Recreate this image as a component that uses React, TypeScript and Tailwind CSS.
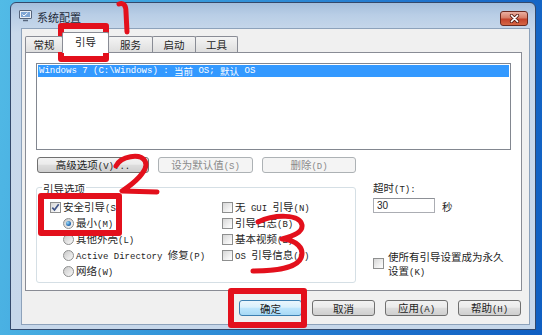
import React from "react";

function T({ s, m, c }: { s: string; m: string; c: string }) {
  const parts = s.match(/[\x00-\x7f]+|[^\x00-\x7f]+/g) || [];
  return (
    <>
      {parts.map((p, i) =>
        /^[\x00-\x7f]/.test(p) ? (
          <span key={i} className={m}>
            {p}
          </span>
        ) : (
          <span key={i} className={c}>
            {p}
          </span>
        )
      )}
    </>
  );
}

const MONO = "font-['Liberation_Mono',monospace] text-[9px] whitespace-pre";
const CJK = "font-['Noto_Sans_CJK_SC',sans-serif] text-[10.5px]";

function L({ s }: { s: string }) {
  return <T s={s} m={MONO} c={CJK} />;
}

function Check({ checked }: { checked?: boolean }) {
  return (
    <span className="inline-flex h-[11px] w-[11px] shrink-0 items-center justify-center border border-[#8e8f8f] bg-[linear-gradient(135deg,#d6d6d6_0%,#f4f4f4_70%,#ffffff_100%)]">
      {checked && (
        <svg width="9" height="9" viewBox="0 0 9 9">
          <path d="M1.3 4.6 L3.5 7 L7.7 1.3" fill="none" stroke="#3f5488" strokeWidth="1.7" />
        </svg>
      )}
    </span>
  );
}

function Radio({ checked }: { checked?: boolean }) {
  return (
    <span className="inline-flex h-[11px] w-[11px] shrink-0 items-center justify-center rounded-full border border-[#8e8f8f] bg-[linear-gradient(135deg,#c8c8c8_0%,#e6e6e6_60%,#fafafa_100%)]">
      {checked && (
        <span className="h-[5px] w-[5px] rounded-full bg-[radial-gradient(circle_at_35%_35%,#9adcf8_0%,#2a70b8_60%,#143f78_100%)]" />
      )}
    </span>
  );
}

function Row({ children, label, indent }: { children: React.ReactNode; label: string; indent?: boolean }) {
  return (
    <div className={indent ? "ml-[13px] flex h-[16px] items-center gap-[2px] text-[#1e1e1e]" : "flex h-[16px] items-center gap-[2px] text-[#1e1e1e]"}>
      {children}
      <span className="leading-[16px]">
        <L s={label} />
      </span>
    </div>
  );
}

function Btn({ label, w, disabled, def }: { label: string; w: string; disabled?: boolean; def?: boolean }) {
  const base = "flex h-[16px] items-center justify-center rounded-[3px] border leading-[14px] ";
  const cls = disabled
    ? base + "border-[#adb2b5] bg-[#f4f4f4] text-[#8a8a8a]"
    : def
    ? base + "border-[#3c7fb1] bg-[linear-gradient(180deg,#eaf6fd_0%,#d9f0fc_45%,#bee6fd_50%,#a7d9f5_100%)] text-[#1e1e1e]"
    : base + "border-[#707070] bg-[linear-gradient(180deg,#f2f2f2_0%,#ebebeb_45%,#dddddd_50%,#cfcfcf_100%)] text-[#1e1e1e]";
  return (
    <div className={cls + " " + w}>
      <span>
        <L s={label} />
      </span>
    </div>
  );
}

function Tab({ label, w, sel }: { label: string; w: string; sel?: boolean }) {
  if (sel)
    return (
      <div className={"-mb-px -ml-px flex h-[21px] items-center justify-center rounded-t-[2px] border border-b-0 border-[#898c95] bg-white pb-[2px] text-[#1e1e1e] " + w}>
        <L s={label} />
      </div>
    );
  return (
    <div className={"-ml-px flex h-[16px] items-center justify-center rounded-t-[2px] border border-b-0 border-[#898c95] bg-[linear-gradient(180deg,#f4f4f4_0%,#e9e9e9_50%,#dedede_100%)] text-[#1e1e1e] " + w}>
      <L s={label} />
    </div>
  );
}

export default function App() {
  return (
    <div className="relative h-[335px] w-[542px] overflow-hidden bg-[linear-gradient(100deg,#52bbe6_0%,#3597da_35%,#1c6fcb_75%,#0f5fc2_100%)]">
      <div className="ml-[10px] mt-[2px] flex h-[328px] w-[526px] flex-col rounded-t-[6px] border border-[#34496b] bg-[linear-gradient(180deg,#a4bedb_0px,#b9cee6_12px,#c9d9eb_30px,#c6d7ea_100%)]">
        {/* title bar */}
        <div className="flex h-[25px] items-center pl-[8px] pr-[7px]">
          <svg width="13" height="12" viewBox="0 0 13 12" className="mt-[1px]">
            <rect x="0.5" y="0.5" width="12" height="8" rx="0.5" fill="#e8eef6" stroke="#56657c" />
            <rect x="2" y="2" width="9" height="5" fill="#7fa5d4" />
            <path d="M3.5 4.5 L5 6 L8.5 2.8" fill="none" stroke="#ffffff" strokeWidth="1" />
            <path d="M4 10.5 H9" stroke="#56657c" strokeWidth="1.5" />
          </svg>
          <span className="ml-[5px] mt-[2px] font-['Noto_Sans_CJK_SC',sans-serif] text-[11px] leading-[14px] text-[#1e2a3a]">系统配置</span>
          <div className="flex-1" />
          <div className="mt-[5px] flex h-[15px] w-[28px] items-center justify-center rounded-[3px] border border-[#6b2a20] bg-[linear-gradient(180deg,#eab0a2_0%,#d77e68_45%,#c4432b_55%,#d66745_100%)]">
            <svg width="11" height="9" viewBox="0 0 11 9">
              <path d="M2.5 1.5 L8.5 7.5 M8.5 1.5 L2.5 7.5" stroke="#5a1f16" strokeWidth="3.2" strokeLinecap="round" />
              <path d="M2.5 1.5 L8.5 7.5 M8.5 1.5 L2.5 7.5" stroke="#ffffff" strokeWidth="1.7" strokeLinecap="round" />
            </svg>
          </div>
        </div>
        {/* client area */}
        <div className="ml-[10px] flex h-[297px] w-[509px] flex-col border border-[#8da2bb] bg-[#f0f0f0] pl-[3px] pr-[7px] pt-[3px]">
          <div className="relative z-10 flex h-[20px] items-end pl-px">
            <Tab label="常规" w="w-[38px]" />
            <Tab label="引导" w="w-[47px]" sel />
            <Tab label="服务" w="w-[45px]" />
            <Tab label="启动" w="w-[44px]" />
            <Tab label="工具" w="w-[43px]" />
          </div>
          <div className="h-[239px] border border-[#898c95] bg-white pl-[10px] pt-[10px]">
            {/* list box */}
            <div className="h-[87px] w-[475px] border border-[#828790] bg-white p-px">
              <div className="flex h-[12px] items-center bg-[#3399ff] pl-px leading-[12px] text-white">
                <T
                  s="Windows 7 (C:\Windows) : 当前 OS; 默认 OS"
                  m="font-['Liberation_Mono',monospace] text-[9px] whitespace-pre"
                  c="font-['Noto_Sans_CJK_SC',sans-serif] text-[9.5px]"
                />
              </div>
            </div>
            {/* buttons */}
            <div className="ml-px mt-[7px] flex gap-[9px]">
              <Btn label="高级选项(V)..." w="w-[112px]" />
              <Btn label="设为默认值(S)" w="w-[95px]" disabled />
              <Btn label="删除(D)" w="w-[94px]" disabled />
            </div>
            {/* lower */}
            <div className="flex">
              <div className="relative mt-[14px] flex h-[96px] w-[320px] rounded-[3px] border border-[#d5dfe5] pl-[13px] pt-[11px]">
                <span className="absolute -top-[8px] left-[5px] bg-white px-px leading-[14px] text-[#1e1e1e]">
                  <L s="引导选项" />
                </span>
                <div className="flex w-[172px] flex-col">
                  <Row label="安全引导(S)">
                    <Check checked />
                  </Row>
                  <Row label="最小(M)" indent>
                    <Radio checked />
                  </Row>
                  <Row label="其他外壳(L)" indent>
                    <Radio />
                  </Row>
                  <Row label="Active Directory 修复(P)" indent>
                    <Radio />
                  </Row>
                  <Row label="网络(W)" indent>
                    <Radio />
                  </Row>
                </div>
                <div className="flex flex-col">
                  <Row label="无 GUI 引导(N)">
                    <Check />
                  </Row>
                  <Row label="引导日志(B)">
                    <Check />
                  </Row>
                  <Row label="基本视频(E)">
                    <Check />
                  </Row>
                  <Row label="OS 引导信息(O)">
                    <Check />
                  </Row>
                </div>
              </div>
              <div className="ml-[17px] flex flex-col">
                <div className="mt-[7px] leading-[13px] text-[#1e1e1e]">
                  <L s="超时(T):" />
                </div>
                <div className="mt-[1px] flex items-center">
                  <div className="flex h-[15px] w-[62px] items-center border border-[#abadb3] border-t-[#8d9096] bg-white pl-[3px] leading-[13px] text-[#1e1e1e]">
                    <span className="font-['Liberation_Sans',sans-serif] text-[10px]">30</span>
                  </div>
                  <span className="ml-[7px] leading-[13px] text-[#1e1e1e]">
                    <L s="秒" />
                  </span>
                </div>
                <div className="mt-[36px] flex items-start gap-[4px]">
                  <span className="mt-[2px]">
                    <Check />
                  </span>
                  <div className="w-[122px] leading-[12px] text-[#1e1e1e]">
                    <L s="使所有引导设置成为永久设置(K)" />
                  </div>
                </div>
              </div>
            </div>
          </div>
          {/* bottom buttons */}
          <div className="mt-[9px] flex justify-end gap-[10px] pr-px">
            <Btn label="确定" w="w-[63px]" def />
            <Btn label="取消" w="w-[63px]" />
            <Btn label="应用(A)" w="w-[63px]" />
            <Btn label="帮助(H)" w="w-[63px]" />
          </div>
        </div>
      </div>
      {/* red hand-drawn annotations */}
      <svg className="pointer-events-none absolute left-0 top-0" width="542" height="335" viewBox="0 0 542 335">
        <g fill="none" stroke="#e3101c" strokeLinecap="round" strokeLinejoin="round">
          <path d="M119 4 C124 2 126 6 126 12 L127 32" strokeWidth="5" />
          <rect x="61" y="26" width="45" height="33" strokeWidth="6" strokeLinecap="butt" />
          <path d="M116 166 C121 156 140 153 145 161 C150 170 133 184 122 191 L157 192" strokeWidth="5" />
          <rect x="41" y="196" width="78" height="37" strokeWidth="6" strokeLinecap="butt" />
          <path d="M258 222 C275 214 300 214 302 225 C303 233 292 236 282 239 C296 240 305 248 301 258 C297 268 275 271 253 271" strokeWidth="5" />
          <rect x="231" y="291" width="73" height="34" strokeWidth="6" strokeLinecap="butt" />
        </g>
      </svg>
    </div>
  );
}
